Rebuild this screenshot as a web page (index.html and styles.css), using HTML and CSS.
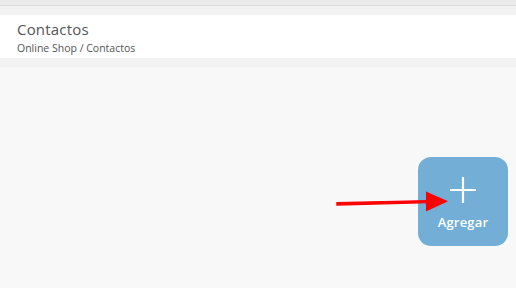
FILE: index.html
```html
<!DOCTYPE html>
<html lang="es">
<head>
  <meta charset="UTF-8">
  <title>Contactos</title>
  <link rel="stylesheet" href="styles.css">
</head>
<body>
  <div class="topbar"></div>
  <div class="page-head">
    <h1>Contactos</h1>
    <div class="crumbs">Online Shop / Contactos</div>
  </div>
  <div class="content">
    <button class="add-button">
      <svg class="plus" width="28" height="28" viewBox="0 0 28 28">
        <path d="M14 1 V27 M1 14 H27" stroke="#fff" stroke-width="2.2" fill="none"/>
      </svg>
      <span>Agregar</span>
    </button>
    <svg class="pointer" width="120" height="30" viewBox="0 0 120 30">
      <path d="M7 15 L99 12.6 L99 10.6 L7 12.8 Z" fill="#f00" stroke="#f00" stroke-width="1.4"/>
      <path d="M96 1.5 L118 11.3 L96 21.5 Z" fill="#f00"/>
    </svg>
  </div>
</body>
</html>
```

FILE: styles.css
```css
body {
  margin: 0;
  font-family: 'Open Sans', Arial, sans-serif;
  background: #f8f8f8;
  height: 288px;
  overflow: hidden;
}

.topbar {
  height: 5px;
  background: #ebebeb;
  border-bottom: 1px solid #dcdcdc;
}

.page-head {
  margin-top: 9px;
  margin-bottom: 9px;
  background: #ffffff;
  padding: 5px 17px 6px;
  height: 32px;
  box-shadow: 0 -9px 0 #f2f2f2, 0 9px 0 #f2f2f2;
}

.page-head h1 {
  margin: 0;
  font-size: 15px;
  font-weight: 400;
  color: #555555;
  line-height: 18px;
  letter-spacing: 0.2px;
}

.crumbs {
  margin-top: 3px;
  font-size: 10.5px;
  color: #555555;
  line-height: 14px;
}

.content {
  position: relative;
  display: flex;
  justify-content: flex-end;
  padding: 90px 8px 0 0;
}

.add-button {
  width: 90px;
  height: 89px;
  border: none;
  border-radius: 13px;
  background: #72aed6;
  color: #ffffff;
  display: flex;
  flex-direction: column;
  align-items: center;
  padding: 19px 0 0;
  font-family: 'Open Sans', Arial, sans-serif;
  font-size: 13px;
  font-weight: 600;
  cursor: pointer;
}

.add-button span {
  margin-top: 9px;
  letter-spacing: 0.2px;
}

.pointer {
  position: absolute;
  left: 330px;
  top: 123px;
}
```
